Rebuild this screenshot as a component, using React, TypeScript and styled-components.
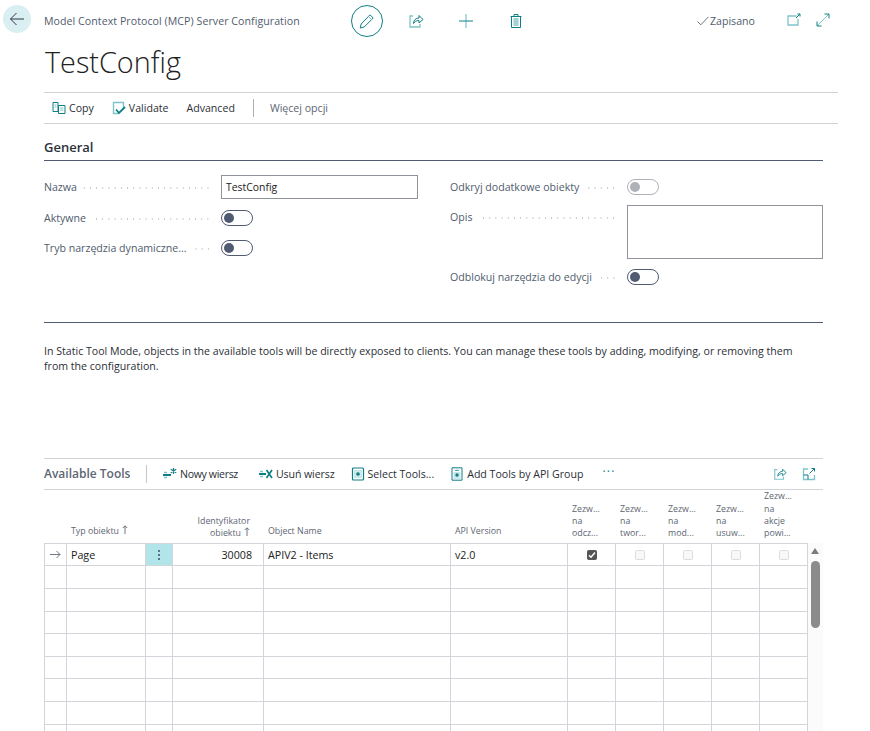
import React from 'react';
import styled, { createGlobalStyle } from 'styled-components';

const Global = createGlobalStyle`
  html, body { margin: 0; padding: 0; height: 731px; overflow: hidden; background: #fff; }
  body { font-family: "Open Sans", "Noto Sans", sans-serif; color: #212121; }
  * { box-sizing: border-box; }
`;

const TEAL = '#0f7f87';
const TEAL_L = '#7fc4c9';

const Page = styled.div`
  width: 870px; height: 731px; overflow: hidden;
`;

const TopBar = styled.div`
  height: 42px; display: flex; align-items: center; padding: 0 0 0 3px;
`;
const BackButton = styled.button`
  width: 28px; height: 28px; border-radius: 50%; border: 0; padding: 0; margin-top: -4px;
  background: #d9eff2; display: flex; align-items: center; justify-content: center;
`;
const Crumb = styled.div`
  margin-left: 13px; width: 307px; font-size: 10.6px; color: #505c6d; letter-spacing: .06px; white-space: nowrap; line-height: 14px;
`;
const EditCircle = styled.button`
  width: 32px; height: 32px; border-radius: 50%; border: 1px solid ${TEAL}; background: #fff; padding: 0;
  display: flex; align-items: center; justify-content: center; margin-right: 25px;
`;
const TopIcon = styled.span<{ $gap: number }>`
  width: 16px; height: 16px; display: flex; margin-right: ${p => p.$gap}px;
`;
const Saved = styled.div`
  display: flex; align-items: center; gap: 1px; font-size: 10.6px; color: #505c6d; width: 90px; margin-left: 173px;
`;

const Title = styled.h1`
  margin: 0 0 0 45px; height: 50px; font-size: 28.8px; line-height: 40px; font-weight: 300; color: #212121;
`;

const ActionBar = styled.div`
  margin-left: 44px; width: 794px; height: 32px; border-top: 1px solid #d3d3d6; border-bottom: 1px solid #d3d3d6;
  display: flex; align-items: center; padding-left: 8px;
`;
const Action = styled.span<{ $mr?: number; $muted?: boolean; $ls?: number }>`
  display: inline-flex; align-items: center; gap: 3px; font-size: 10.6px; white-space: nowrap;
  color: ${p => (p.$muted ? '#5d6673' : '#2b2f36')}; margin-right: ${p => p.$mr ?? 0}px;
  letter-spacing: ${p => p.$ls ?? 0}px;
`;
const BarDivider = styled.span`
  width: 1px; height: 18px; background: #a9adb5; margin-right: 16px;
`;

const Section = styled.section`
  margin: 15px 47px 0 44px;
`;
const SectionTitle = styled.h2`
  margin: 0; height: 22px; font-size: 13px; line-height: 17px; font-weight: 600; color: #2c313a; border-bottom: 1px solid #4f5b70;
`;
const Fields = styled.div`
  display: grid; grid-template-columns: 374px 373px; column-gap: 32px; padding-top: 14px; height: 162px; border-bottom: 1px solid #4f5b70;
`;
const Col = styled.div`
  display: flex; flex-direction: column; align-items: stretch;
`;
const Row = styled.div<{ $h: number; $top?: boolean; $mt?: number }>`
  height: ${p => p.$h}px; margin-top: ${p => p.$mt ?? 0}px; display: flex; align-items: ${p => (p.$top ? 'flex-start' : 'center')};
`;
const Label = styled.div<{ $top?: boolean }>`
  width: 177px; display: flex; align-items: center; font-size: 10.6px; color: #505c6d; padding-right: 10px; white-space: nowrap;
  line-height: 14px; overflow: hidden; margin-top: ${p => (p.$top ? 5 : 0)}px;
`;
const Dots = styled.span`
  flex: 1; height: 2px; margin: 1px 0 0 6px;
  background-image: radial-gradient(circle, #c3c6cc .9px, transparent 1px);
  background-size: 6.2px 2px; background-position: right center;
`;
const Input = styled.div`
  width: 197px; height: 24px; border: 1px solid #8f949c; font-size: 10.4px; color: #212121; padding: 0 4px;
  display: flex; align-items: center;
`;
const TextArea = styled.div`
  width: 196px; height: 54px; border: 1px solid #8f949c;
`;
const Toggle = styled.span<{ $off?: boolean }>`
  width: 32px; height: 16px; border-radius: 8px; border: 1px solid ${p => (p.$off ? '#aeb1b7' : '#505a70')};
  display: flex; align-items: center; padding-left: 2px; background: #fff;
  &::before {
    content: ''; width: 10px; height: 10px; border-radius: 50%;
    background: ${p => (p.$off ? '#aeb1b7' : '#505a70')};
  }
`;

const Note = styled.p`
  margin: 21px 0 0 44px; height: 114px; width: 770px; font-size: 10.6px; line-height: 15px; color: #2b2f36;
`;

const ToolsBar = styled.div`
  margin-left: 44px; width: 779px; height: 32px; border-top: 1px solid #d3d3d6; border-bottom: 1px solid #d3d3d6;
  display: flex; align-items: center;
`;
const ToolsTitle = styled.div`
  font-size: 12px; font-weight: 600; color: #5d6673; width: 102px; white-space: nowrap; line-height: 16px;
`;
const ToolsSep = styled.span`
  width: 1px; height: 18px; background: #c6c8cd; margin-right: 16px;
`;
const More = styled.span`
  color: ${TEAL}; font-size: 12px; letter-spacing: 1.3px; margin: -6px 0 0 7px; flex: 1;
`;
const EndIcon = styled.span<{ $mr: number }>`
  display: flex; width: 14px; height: 14px; margin-right: ${p => p.$mr}px;
`;

const TableWrap = styled.div`
  margin-left: 44px; width: 779px; display: flex; align-items: flex-start;
`;
const Grid = styled.div`
  width: 764px; display: grid;
  grid-template-columns: 23px 79px 27px 91px 187px 117px 48px 48px 48px 48px 48px;
`;
const Head = styled.div<{ $right?: boolean; $low?: boolean }>`
  height: 52.85px; display: flex; align-items: flex-end; justify-content: ${p => (p.$right ? 'flex-end' : 'flex-start')};
  text-align: ${p => (p.$right ? 'right' : 'left')};
  padding: 0 ${p => (p.$right ? 14 : 0)}px ${p => (p.$low ? 4 : 6)}px 4px;
  font-size: 8.8px; line-height: 12.1px; color: #5d6673;
  span { display: block; }
`;
const Cell = styled.div<{ $first?: boolean; $tint?: boolean; $right?: boolean; $center?: boolean }>`
  height: 22.6px; border-top: 1px solid #d3d5da; border-right: 1px solid #d3d5da;
  border-left: ${p => (p.$first ? '1px solid #d3d5da' : '0')};
  background: ${p => (p.$tint ? '#b2e5e9' : 'transparent')};
  display: flex; align-items: center; padding: 0 ${p => (p.$right ? 11 : 4)}px;
  justify-content: ${p => (p.$right ? 'flex-end' : p.$center ? 'center' : 'flex-start')};
  font-size: 10.7px; color: #212121; white-space: nowrap; overflow: hidden;
`;
const Check = styled.span<{ $on?: boolean }>`
  width: 10px; height: 10px; border-radius: 1.5px; display: flex; align-items: center; justify-content: center;
  background: ${p => (p.$on ? '#555' : '#f8f8f8')}; border: 1px solid ${p => (p.$on ? '#555' : '#dcdcdc')};
`;
const Kebab = styled.span`
  display: flex; flex-direction: column; gap: 2px;
  i { display: block; width: 2px; height: 2px; background: #33535a; border-radius: 50%; }
`;
const Scroll = styled.div`
  width: 15px; height: 241px; margin-top: 53px; background: #fbfbfb; position: relative;
`;
const ScrollUp = styled.span`
  position: absolute; left: 3px; top: 5px; width: 0; height: 0;
  border-left: 4.5px solid transparent; border-right: 4.5px solid transparent; border-bottom: 6px solid #7c7c7c;
`;
const Thumb = styled.span`
  position: absolute; left: 3px; top: 18px; width: 9px; height: 67px; border-radius: 4.5px; background: #8b8b8b;
`;

const s = { fill: 'none', stroke: TEAL, strokeWidth: 1 } as const;
const l = { fill: 'none', stroke: TEAL_L, strokeWidth: 1 } as const;

const ArrowLeft = () => (
  <svg width="16" height="16" viewBox="0 0 16 16"><path d="M15 8H1.5M7.5 2 1.5 8l6 6" fill="none" stroke="#2f3640" strokeWidth="1" /></svg>
);
const Pencil = () => (
  <svg width="16" height="16" viewBox="0 0 16 16">
    <path d="M11 1.8 14.2 5 5.2 14 1.2 15l1-4z" {...s} />
    <path d="M9.5 3.5 12.5 6.5" {...l} />
  </svg>
);
const ShareIcon = ({ size = 16 }: { size?: number }) => (
  <svg width={size} height={size} viewBox="0 0 16 16">
    <path d="M5 3H2v11h10v-3" {...l} strokeWidth={1.3} />
    <path d="M5.5 10.5c0-3.5 2.5-5.5 5.5-5.5V2.5l4 4-4 3.5V7.5c-2.5 0-4.5 1-5.5 3z" {...s} />
  </svg>
);
const Plus = () => (
  <svg width="16" height="16" viewBox="0 0 16 16">
    <path d="M8 1v14" {...l} strokeWidth={1.2} />
    <path d="M1 8h14" {...s} />
  </svg>
);
const Trash = () => (
  <svg width="16" height="16" viewBox="0 0 16 16">
    <path d="M3.5 3.5v11h9v-11" {...s} />
    <path d="M2.5 3.5h11M6 3V1.5h4V3" {...s} />
    <rect x="5.5" y="5" width="5" height="8" fill="#9fd3d7" />
  </svg>
);
const CheckMark = () => (
  <svg width="12" height="10" viewBox="0 0 12 10"><path d="M.5 5.5 3.8 8.8 11.5 .8" fill="none" stroke="#6d7480" strokeWidth="1" /></svg>
);
const PopOut = () => (
  <svg width="14" height="14" viewBox="0 0 14 14">
    <path d="M9.5 3H1v9h10V6" {...l} strokeWidth={1.3} />
    <path d="M9 5l4-4M10.5 1H13v2.5" {...s} />
  </svg>
);
const Expand = () => (
  <svg width="14" height="14" viewBox="0 0 14 14">
    <path d="M1 13 13 1" {...l} />
    <path d="M8.5 1H13v4.5M1 8.5V13h4.5" {...s} />
  </svg>
);
const CopyIcon = () => (
  <svg width="14" height="14" viewBox="0 0 14 14">
    <path d="M1 1.5h5v9H1z" {...s} />
    <path d="M2.5 4h2M2.5 6h2" {...l} />
    <path d="M6.5 4.5h6.5v8H6.5z" {...s} />
    <path d="M8 7h3.5M8 9h3.5" {...l} />
  </svg>
);
const ValidateIcon = () => (
  <svg width="14" height="14" viewBox="0 0 14 14">
    <path d="M7 12.5H1.5V1.5h10V7" {...l} strokeWidth={1.4} />
    <path d="M4 8.5 7 12l6-6" fill="none" stroke={TEAL} strokeWidth="1.8" />
  </svg>
);
const NewRow = () => (
  <svg width="14" height="14" viewBox="0 0 14 14">
    <path d="M0 8h8" stroke={TEAL} strokeWidth="2" fill="none" />
    <path d="M1 5.5h3M1 10.5h3" {...l} strokeWidth={1.4} />
    <path d="M10.5 1v6M7.8 2.3l5.4 3.4M13.2 2.3 7.8 5.7" stroke={TEAL} strokeWidth="1.2" fill="none" />
  </svg>
);
const DelRow = () => (
  <svg width="14" height="14" viewBox="0 0 14 14">
    <path d="M0 7h7" stroke={TEAL} strokeWidth="2" fill="none" />
    <path d="M1 4.5h3M1 9.5h3" {...l} strokeWidth={1.4} />
    <path d="M7.5 3l5.5 8M13 3l-5.5 8" stroke={TEAL} strokeWidth="1.7" fill="none" />
  </svg>
);
const SelectTools = () => (
  <svg width="14" height="14" viewBox="0 0 14 14">
    <rect x="1.5" y="1" width="11" height="12" rx="1" {...s} strokeWidth={1.2} />
    <rect x="3" y="3" width="8" height="8" fill="#cbe8ea" />
    <circle cx="7" cy="7" r="1.8" fill={TEAL} />
  </svg>
);
const ApiGroup = () => (
  <svg width="14" height="14" viewBox="0 0 14 14">
    <path d="M2 .8h10v12.4H2z" {...s} />
    <rect x="3.5" y="5" width="7" height="7" fill="#cbe8ea" />
    <circle cx="7" cy="8" r="1.7" fill={TEAL} />
    <path d="M5 2.8l1 1 1-1 1 1 1-1" {...s} />
  </svg>
);
const ExpandBox = () => (
  <svg width="14" height="14" viewBox="0 0 14 14">
    <path d="M6 2H1.5v10.5H12.5V8" {...l} strokeWidth={1.3} />
    <path d="M7.5 6.5 12.5 1.5M9.5 1.5h3v3M1.5 8h4.5v4.5" {...s} />
  </svg>
);
const UpSort = () => (
  <svg width="6" height="9" viewBox="0 0 6 9" style={{ marginLeft: 3 }}><path d="M3 9V1M.8 3 3 .8 5.2 3" fill="none" stroke="#5d6673" strokeWidth=".9" /></svg>
);
const RowArrow = () => (
  <svg width="11" height="9" viewBox="0 0 11 9"><path d="M0 4.5h10M6.5 1 10 4.5 6.5 8" fill="none" stroke="#5d6673" strokeWidth=".9" /></svg>
);
const Tick = () => (
  <svg width="8" height="8" viewBox="0 0 8 8"><path d="M1 4.2 3 6.3 7 1.5" fill="none" stroke="#fff" strokeWidth="1.4" /></svg>
);

const permHeads = [
  ['Zezw...', 'na', 'odcz...'],
  ['Zezw...', 'na', 'twor...'],
  ['Zezw...', 'na', 'mod...'],
  ['Zezw...', 'na', 'usuw...'],
  ['Zezw...', 'na', 'akcje', 'powi...'],
];

export default function App() {
  return (
    <Page>
      <Global />
      <TopBar>
        <BackButton aria-label="Wstecz"><ArrowLeft /></BackButton>
        <Crumb>Model Context Protocol (MCP) Server Configuration</Crumb>
        <EditCircle aria-label="Edytuj"><Pencil /></EditCircle>
        <TopIcon $gap={34}><ShareIcon /></TopIcon>
        <TopIcon $gap={34}><Plus /></TopIcon>
        <TopIcon $gap={0}><Trash /></TopIcon>
        <Saved><CheckMark />Zapisano</Saved>
        <TopIcon $gap={13}><PopOut /></TopIcon>
        <TopIcon $gap={0}><Expand /></TopIcon>
      </TopBar>
      <Title>TestConfig</Title>
      <ActionBar>
        <Action $mr={18}><CopyIcon />Copy</Action>
        <Action $mr={18}><ValidateIcon />Validate</Action>
        <Action $mr={18}>Advanced</Action>
        <BarDivider />
        <Action $muted>Więcej opcji</Action>
      </ActionBar>
      <Section>
        <SectionTitle>General</SectionTitle>
        <Fields>
          <Col>
            <Row $h={24}><Label>Nazwa<Dots /></Label><Input>TestConfig</Input></Row>
            <Row $h={38}><Label>Aktywne<Dots /></Label><Toggle /></Row>
            <Row $h={22}><Label>Tryb narzędzia dynamiczne...<Dots /></Label><Toggle /></Row>
          </Col>
          <Col>
            <Row $h={24}><Label>Odkryj dodatkowe obiekty<Dots /></Label><Toggle $off /></Row>
            <Row $h={54} $mt={6} $top>
              <Label $top>Opis<Dots /></Label>
              <TextArea />
            </Row>
            <Row $h={36}><Label>Odblokuj narzędzia do edycji<Dots /></Label><Toggle /></Row>
          </Col>
        </Fields>
      </Section>
      <Note>
        In Static Tool Mode, objects in the available tools will be directly exposed to clients. You can manage these tools by adding, modifying, or removing them from the configuration.
      </Note>
      <ToolsBar>
        <ToolsTitle>Available Tools</ToolsTitle>
        <ToolsSep />
        <Action $mr={21} $ls={-0.35}><NewRow />Nowy wiersz</Action>
        <Action $mr={16} $ls={-0.1}><DelRow />Usuń wiersz</Action>
        <Action $mr={16}><SelectTools />Select Tools...</Action>
        <Action $mr={12}><ApiGroup />Add Tools by API Group</Action>
        <More>···</More>
        <EndIcon $mr={15}><ShareIcon size={14} /></EndIcon>
        <EndIcon $mr={7}><ExpandBox /></EndIcon>
      </ToolsBar>
      <TableWrap>
        <Grid>
          <Head />
          <Head><span>Typ obiektu<UpSort /></span></Head>
          <Head />
          <Head $right $low><span>Identyfikator<br />obiektu<UpSort /></span></Head>
          <Head><span>Object Name</span></Head>
          <Head><span>API Version</span></Head>
          {permHeads.map((h, i) => (
            <Head key={i} $low><span>{h.map((t, j) => <React.Fragment key={j}>{t}<br /></React.Fragment>)}</span></Head>
          ))}

          <Cell $first $center><RowArrow /></Cell>
          <Cell>Page</Cell>
          <Cell $tint $center><Kebab><i /><i /><i /></Kebab></Cell>
          <Cell $right>30008</Cell>
          <Cell>APIV2 - Items</Cell>
          <Cell>v2.0</Cell>
          <Cell $center><Check $on><Tick /></Check></Cell>
          <Cell $center><Check /></Cell>
          <Cell $center><Check /></Cell>
          <Cell $center><Check /></Cell>
          <Cell $center><Check /></Cell>

          {Array.from({ length: 8 }).map((_, r) =>
            Array.from({ length: 11 }).map((__, c) => <Cell key={`${r}-${c}`} $first={c === 0} />)
          )}
        </Grid>
        <Scroll><ScrollUp /><Thumb /></Scroll>
      </TableWrap>
    </Page>
  );
}
